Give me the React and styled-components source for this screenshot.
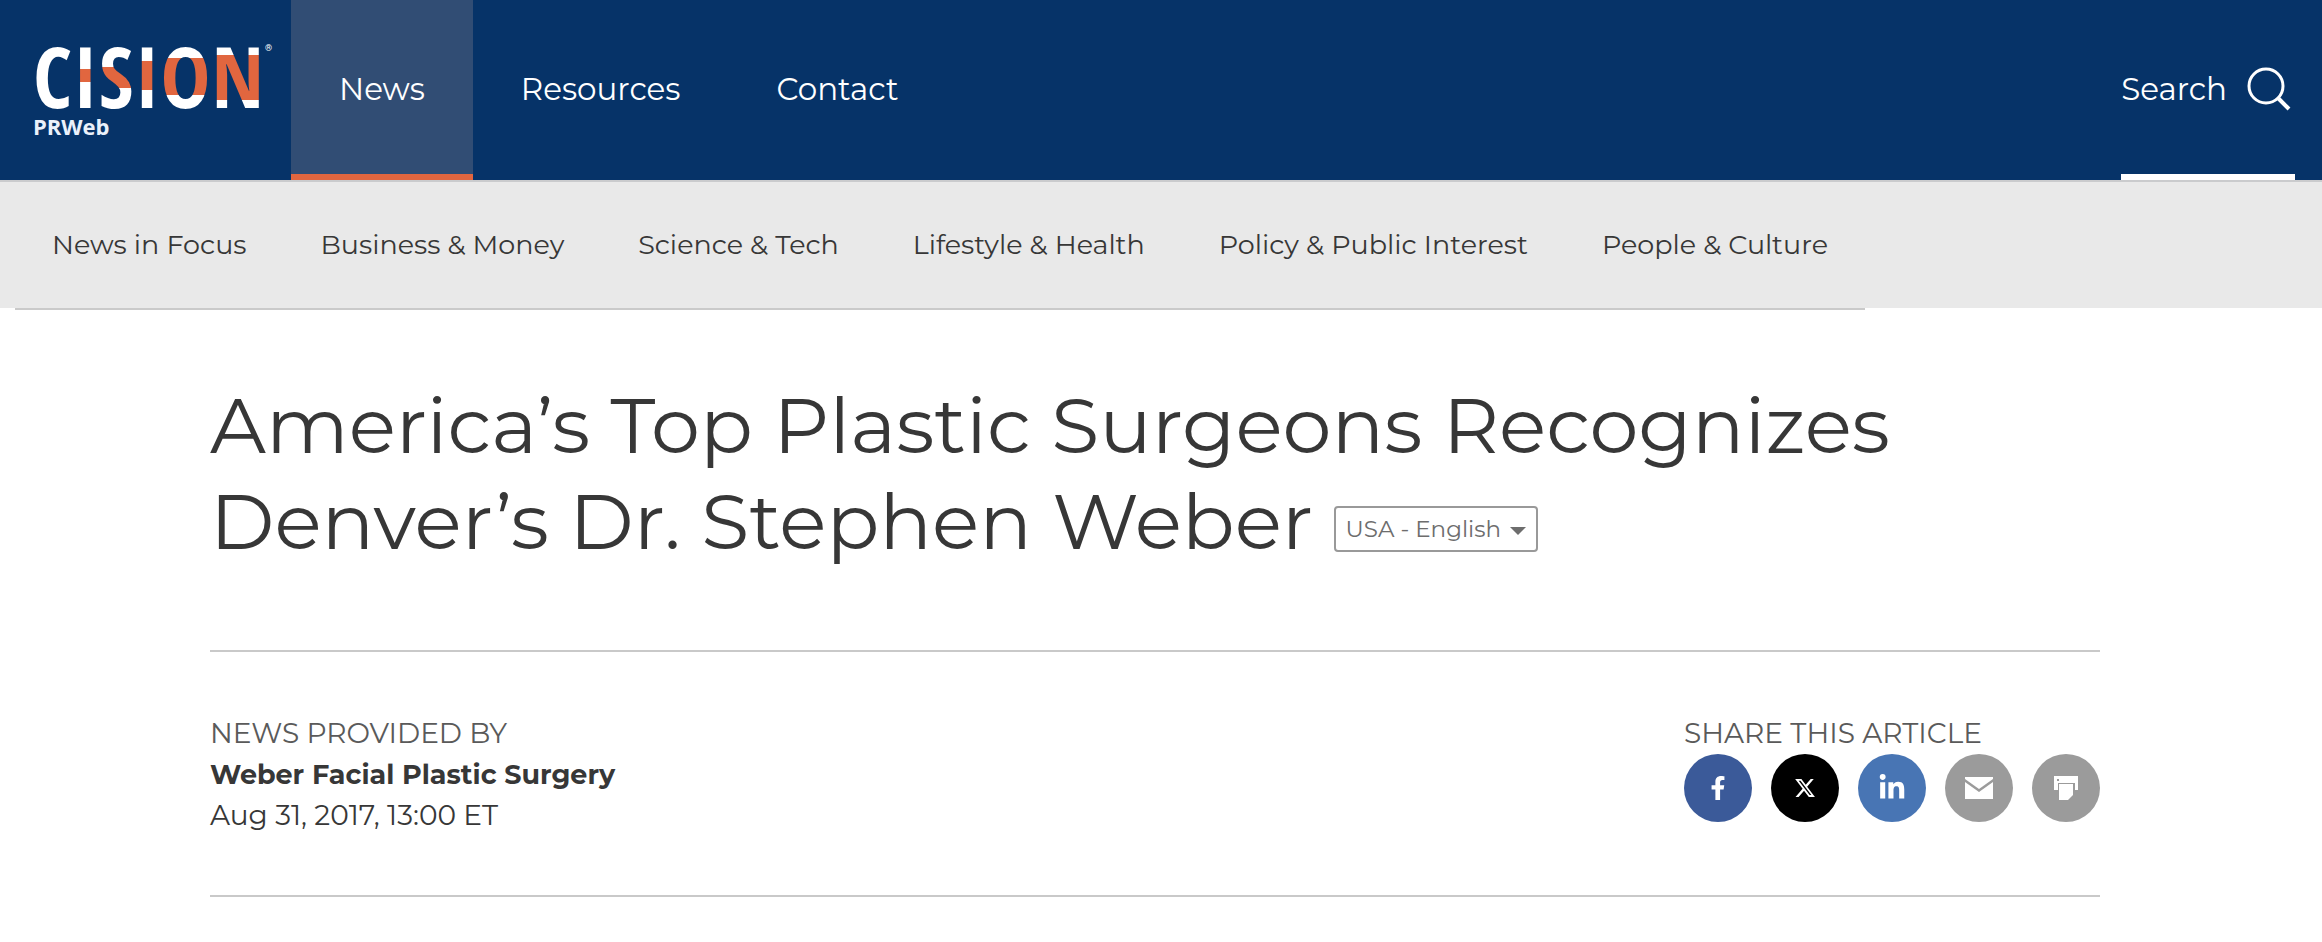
import React, { useState } from 'react';
import styled, { createGlobalStyle } from 'styled-components';
import { FaFacebookF, FaLinkedinIn } from 'react-icons/fa';
import { FaXTwitter } from 'react-icons/fa6';

const menu = ['News', 'Resources', 'Contact'];

const categories = [
  'News in Focus',
  'Business & Money',
  'Science & Tech',
  'Lifestyle & Health',
  'Policy & Public Interest',
  'People & Culture',
];

// top and bottom of the orange stripe in each letter
const logoLetters = [
  { letter: 'C', from: 0, to: 0 },
  { letter: 'I', from: 27, to: 40 },
  { letter: 'S', from: 25, to: 46 },
  { letter: 'I', from: 19, to: 48 },
  { letter: 'O', from: 16, to: 53 },
  { letter: 'N', from: 13, to: 58 },
];

const shareLinks = [
  { name: 'Facebook', color: '#3b5a99', icon: <FaFacebookF size={24} /> },
  { name: 'X', color: '#000', icon: <FaXTwitter size={22} /> },
  { name: 'LinkedIn', color: '#4875b4', icon: <FaLinkedinIn size={28} /> },
  { name: 'Email', color: '#9b9b9b', icon: <MailIcon /> },
  { name: 'Print', color: '#9b9b9b', icon: <PrintIcon /> },
];

export default function App() {
  const [language, setLanguage] = useState('en');

  return (
    <>
      <GlobalStyle />

      <Header>
        <LogoLink href="#" aria-label="Cision PRWeb">
          <Wordmark>
            {logoLetters.map(({ letter, from, to }, index) => (
              <LogoLetter key={index} $from={from} $to={to}>
                {letter}
              </LogoLetter>
            ))}
            <Registered>®</Registered>
          </Wordmark>
          <Brand>PRWeb</Brand>
        </LogoLink>
        <MainNav>
          {menu.map((item) => (
            <MenuLink key={item} href="#" $active={item === 'News'}>
              {item}
            </MenuLink>
          ))}
        </MainNav>
        <SearchLink href="#">
          Search
          <SearchIcon />
        </SearchLink>
      </Header>

      <SubNav>
        <CategoryList>
          {categories.map((item) => (
            <li key={item}>
              <CategoryLink href="#">{item}</CategoryLink>
            </li>
          ))}
        </CategoryList>
      </SubNav>

      <Article>
        <Title>
          America’s Top Plastic Surgeons Recognizes Denver’s Dr. Stephen Weber{' '}
          <LanguagePicker>
            <LanguageSelect
              aria-label="Language"
              value={language}
              onChange={(e) => setLanguage(e.target.value)}
            >
              <option value="en">USA - English</option>
            </LanguageSelect>
            <Caret viewBox="0 0 16 8" aria-hidden="true">
              <path d="M0 0h16L8 8z" fill="currentColor" />
            </Caret>
          </LanguagePicker>
        </Title>

        <Meta>
          <div>
            <Label>NEWS PROVIDED BY</Label>
            <Source href="#">Weber Facial Plastic Surgery</Source>
            <Text>Aug 31, 2017, 13:00 ET</Text>
          </div>
          <div>
            <Label>SHARE THIS ARTICLE</Label>
            <ShareRow>
              {shareLinks.map(({ name, color, icon }) => (
                <ShareLink key={name} href="#" aria-label={name} $color={color}>
                  {icon}
                </ShareLink>
              ))}
            </ShareRow>
          </div>
        </Meta>
      </Article>
    </>
  );
}

function SearchIcon() {
  return (
    <svg width="44" height="44" viewBox="0 0 44 44" fill="none" stroke="#fff" strokeWidth="3" aria-hidden="true">
      <circle cx="19" cy="19" r="17" />
      <path d="M31 31L42 42" strokeWidth="4" />
    </svg>
  );
}

function MailIcon() {
  return (
    <svg width="28" height="22" viewBox="0 0 28 22" fill="#fff" aria-hidden="true">
      <path d="M0 0H28V2L14 12L0 2Z" />
      <path d="M0 5L14 15L28 5V22H0Z" />
    </svg>
  );
}

function PrintIcon() {
  return (
    <svg width="24" height="24" viewBox="0 0 24 24" fill="#fff" aria-hidden="true">
      <path fillRule="evenodd" d="M0 0H24V14H21V7H4V14H0ZM3 3V5H5V3Z" />
      <path d="M5 8H19V19L14 24H5Z" />
    </svg>
  );
}

const GlobalStyle = createGlobalStyle`
  * {
    box-sizing: border-box;
  }
  body {
    margin: 0;
    background: #fff;
    color: #373737;
    font-family: Montserrat, Inter, sans-serif;
    font-size: 28px;
  }
  a {
    color: inherit;
    text-decoration: none;
  }
`;

const Header = styled.header`
  display: flex;
  height: 182px;
  padding-right: 27px;
  background: #063368;
  border-bottom: 2px solid #cacbcd;
  color: #fff;
  font-size: 31px;
`;

const LogoLink = styled.a`
  width: 291px;
  padding: 42px 19px 0 33px;
`;

const Wordmark = styled.span`
  display: flex;
  justify-content: space-between;
  font-family: 'Open Sans Condensed', 'Roboto Condensed', sans-serif;
  font-size: 84px;
  font-weight: 700;
  line-height: 68px;
`;

const LogoLetter = styled.span`
  background: ${({ $from, $to }) =>
    `linear-gradient(#fff ${$from}px, #e1663f ${$from}px ${$to}px, #fff ${$to}px)`};
  background-clip: text;
  color: transparent;
`;

const Registered = styled.span`
  font-family: Roboto, sans-serif;
  font-size: 9px;
  font-weight: 400;
  line-height: 12px;
`;

const Brand = styled.span`
  display: block;
  color: #eaf1fb;
  font-family: 'Open Sans', sans-serif;
  font-size: 22px;
  font-weight: 700;
  line-height: 32px;
`;

const MainNav = styled.nav`
  display: flex;
  flex: 1;
`;

const MenuLink = styled.a`
  display: flex;
  align-items: center;
  padding: 0 48px 2px;
  background: ${({ $active }) => ($active ? '#314d74' : 'transparent')};
  box-shadow: ${({ $active }) => ($active ? 'inset 0 -6px #e1663f' : 'none')};
`;

const SearchLink = styled.a`
  display: flex;
  align-items: center;
  gap: 20px;
  padding: 0 4px 2px 0;
  box-shadow: inset 0 -6px #fff;
`;

const SubNav = styled.nav`
  height: 126px;
  background: #e9e9e9;
`;

const CategoryList = styled.ul`
  display: flex;
  align-items: center;
  width: fit-content;
  height: 128px;
  margin: 0 0 0 15px;
  padding: 0 0 2px;
  border-bottom: 2px solid #cacaca;
  font-size: 27px;
  list-style: none;
`;

const CategoryLink = styled.a`
  padding: 0 37px;
`;

const Article = styled.main`
  padding: 69px 222px 0 210px;
`;

const Title = styled.h1`
  margin: 0;
  padding-bottom: 81px;
  border-bottom: 2px solid #c9c9c9;
  font-size: 78px;
  font-weight: 400;
  line-height: 96px;
`;

const LanguagePicker = styled.span`
  display: inline-flex;
  position: relative;
  vertical-align: middle;
  color: #6d6d6d;
`;

const LanguageSelect = styled.select`
  height: 46px;
  padding: 0 34px 0 10px;
  appearance: none;
  background: #fff;
  border: 2px solid #999;
  border-radius: 4px;
  color: inherit;
  font-family: inherit;
  font-size: 23px;
`;

const Caret = styled.svg`
  position: absolute;
  top: 21px;
  right: 12px;
  width: 16px;
  height: 8px;
  pointer-events: none;
`;

const Meta = styled.section`
  display: flex;
  justify-content: space-between;
  padding: 61px 0 59px;
  border-bottom: 2px solid #c9c9c9;
  line-height: 41px;
`;

const Text = styled.p`
  margin: 0;
`;

const Label = styled(Text)`
  color: #5a5a5a;
`;

const Source = styled.a`
  display: block;
  font-size: 27px;
  font-weight: 700;
`;

const ShareRow = styled.div`
  display: flex;
  gap: 19px;
`;

const ShareLink = styled.a`
  display: flex;
  align-items: center;
  justify-content: center;
  width: 68px;
  height: 68px;
  border-radius: 50%;
  background: ${({ $color }) => $color};
  color: #fff;
`;
